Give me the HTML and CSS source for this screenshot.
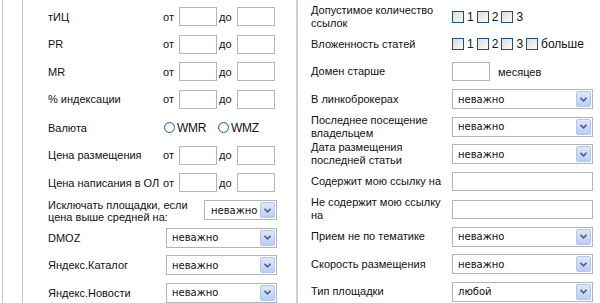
FILE: index.html
```html
<!DOCTYPE html>
<html lang="ru">

<head>
    <meta charset="UTF-8">
    <title>Фильтр площадок</title>
    <link rel="stylesheet" href="styles.css">
</head>

<body>
    <div class="page">
        <div class="left-panel">
            <div class="row range">
                <span class="label">тИЦ</span>
                <span class="from">от</span><input type="text" class="num">
                <span class="to">до</span><input type="text" class="num">
            </div>
            <div class="row range">
                <span class="label">PR</span>
                <span class="from">от</span><input type="text" class="num">
                <span class="to">до</span><input type="text" class="num">
            </div>
            <div class="row range">
                <span class="label">MR</span>
                <span class="from">от</span><input type="text" class="num">
                <span class="to">до</span><input type="text" class="num">
            </div>
            <div class="row range">
                <span class="label">% индексации</span>
                <span class="from">от</span><input type="text" class="num">
                <span class="to">до</span><input type="text" class="num">
            </div>
            <div class="row currency">
                <span class="label">Валюта</span>
                <label class="radio"><i class="circle"></i>WMR</label>
                <label class="radio"><i class="circle"></i>WMZ</label>
            </div>
            <div class="row range">
                <span class="label">Цена размещения</span>
                <span class="from">от</span><input type="text" class="num">
                <span class="to">до</span><input type="text" class="num">
            </div>
            <div class="row range">
                <span class="label">Цена написания в ОЛ</span>
                <span class="from">от</span><input type="text" class="num">
                <span class="to">до</span><input type="text" class="num">
            </div>
            <div class="row">
                <span class="label label-wide">Исключать площадки, если цена выше средней на:</span>
                <div class="select select-small"><span>неважно</span><i class="arrow"><svg width="7" height="5" viewBox="0 0 7 5"><path d="M0.5 0.8 L3.5 3.8 L6.5 0.8" fill="none" stroke="#4d6185" stroke-width="1.6"/></svg></i></div>
            </div>
            <div class="row">
                <span class="label label-sel">DMOZ</span>
                <div class="select select-left"><span>неважно</span><i class="arrow"><svg width="7" height="5" viewBox="0 0 7 5"><path d="M0.5 0.8 L3.5 3.8 L6.5 0.8" fill="none" stroke="#4d6185" stroke-width="1.6"/></svg></i></div>
            </div>
            <div class="row">
                <span class="label label-sel">Яндекс.Каталог</span>
                <div class="select select-left"><span>неважно</span><i class="arrow"><svg width="7" height="5" viewBox="0 0 7 5"><path d="M0.5 0.8 L3.5 3.8 L6.5 0.8" fill="none" stroke="#4d6185" stroke-width="1.6"/></svg></i></div>
            </div>
            <div class="row">
                <span class="label label-sel">Яндекс.Новости</span>
                <div class="select select-left"><span>неважно</span><i class="arrow"><svg width="7" height="5" viewBox="0 0 7 5"><path d="M0.5 0.8 L3.5 3.8 L6.5 0.8" fill="none" stroke="#4d6185" stroke-width="1.6"/></svg></i></div>
            </div>
        </div>

        <div class="right-panel">
            <div class="row">
                <span class="rlabel">Допустимое количество ссылок</span>
                <div class="checks">
                    <label class="check"><i class="box"></i>1</label>
                    <label class="check"><i class="box"></i>2</label>
                    <label class="check"><i class="box"></i>3</label>
                </div>
            </div>
            <div class="row">
                <span class="rlabel">Вложенность статей</span>
                <div class="checks">
                    <label class="check"><i class="box"></i>1</label>
                    <label class="check"><i class="box"></i>2</label>
                    <label class="check"><i class="box"></i>3</label>
                    <label class="check"><i class="box"></i>больше</label>
                </div>
            </div>
            <div class="row">
                <span class="rlabel">Домен старше</span>
                <input type="text" class="num">
                <span class="months">месяцев</span>
            </div>
            <div class="row">
                <span class="rlabel">В линкоброкерах</span>
                <div class="select"><span>неважно</span><i class="arrow"><svg width="7" height="5" viewBox="0 0 7 5"><path d="M0.5 0.8 L3.5 3.8 L6.5 0.8" fill="none" stroke="#4d6185" stroke-width="1.6"/></svg></i></div>
            </div>
            <div class="row">
                <span class="rlabel">Последнее посещение владельцем</span>
                <div class="select"><span>неважно</span><i class="arrow"><svg width="7" height="5" viewBox="0 0 7 5"><path d="M0.5 0.8 L3.5 3.8 L6.5 0.8" fill="none" stroke="#4d6185" stroke-width="1.6"/></svg></i></div>
            </div>
            <div class="row">
                <span class="rlabel">Дата размещения последней статьи</span>
                <div class="select"><span>неважно</span><i class="arrow"><svg width="7" height="5" viewBox="0 0 7 5"><path d="M0.5 0.8 L3.5 3.8 L6.5 0.8" fill="none" stroke="#4d6185" stroke-width="1.6"/></svg></i></div>
            </div>
            <div class="row">
                <span class="rlabel">Содержит мою ссылку на</span>
                <input type="text" class="wide">
            </div>
            <div class="row">
                <span class="rlabel">Не содержит мою ссылку на</span>
                <input type="text" class="wide">
            </div>
            <div class="row">
                <span class="rlabel">Прием не по тематике</span>
                <div class="select"><span>неважно</span><i class="arrow"><svg width="7" height="5" viewBox="0 0 7 5"><path d="M0.5 0.8 L3.5 3.8 L6.5 0.8" fill="none" stroke="#4d6185" stroke-width="1.6"/></svg></i></div>
            </div>
            <div class="row">
                <span class="rlabel">Скорость размещения</span>
                <div class="select"><span>неважно</span><i class="arrow"><svg width="7" height="5" viewBox="0 0 7 5"><path d="M0.5 0.8 L3.5 3.8 L6.5 0.8" fill="none" stroke="#4d6185" stroke-width="1.6"/></svg></i></div>
            </div>
            <div class="row">
                <span class="rlabel">Тип площадки</span>
                <div class="select"><span>любой</span><i class="arrow"><svg width="7" height="5" viewBox="0 0 7 5"><path d="M0.5 0.8 L3.5 3.8 L6.5 0.8" fill="none" stroke="#4d6185" stroke-width="1.6"/></svg></i></div>
            </div>
        </div>
    </div>
</body>

</html>
```

FILE: styles.css
```css
body {
    margin: 0;
    padding: 0;
    background-color: #fff;
    font-family: "Liberation Sans", Arial, sans-serif;
    font-size: 11px;
    color: #111;
}

.page {
    display: flex;
    margin-left: 2px;
    padding-left: 19px;
    border-left: 1px solid #c8c8c8;
    height: 303px;
    overflow: hidden;
}

.left-panel {
    width: 273px;
    border-left: 1px solid #c8c8c8;
    border-right: 2px solid #d0d0d0;
    padding-top: 3px;
    box-sizing: content-box;
}

.right-panel {
    flex: 1;
    padding-left: 13px;
    padding-top: 3px;
}

.row {
    display: flex;
    align-items: center;
    height: 27.5px;
}

.left-panel .row {
    padding-left: 25px;
}

.label {
    width: 114px;
    flex-shrink: 0;
    white-space: nowrap;
}

.label-sel {
    width: 118px;
}

.label-wide {
    width: 156px;
    white-space: normal;
    line-height: 12px;
    padding-top: 2px;
}

.from {
    width: 16px;
    padding-left: 1px;
    flex-shrink: 0;
}

.to {
    width: 18px;
    padding-left: 2px;
    flex-shrink: 0;
}

input.num {
    width: 38px;
    height: 19px;
    margin: 0;
    padding: 0;
    border: 1px solid #b4b4b4;
    box-sizing: border-box;
    flex-shrink: 0;
}

input.wide {
    width: 141px;
    height: 19px;
    margin: 0;
    padding: 0;
    border: 1px solid #b4b4b4;
    box-sizing: border-box;
}

.currency {
    padding-top: 1px;
}

.currency .label {
    width: 116px;
}

.radio {
    display: flex;
    align-items: center;
    margin-right: 12px;
    font-size: 12px;
    letter-spacing: -0.3px;
}

.circle {
    width: 11px;
    height: 11px;
    margin-right: 2px;
    border: 1px solid #1f5bb0;
    border-radius: 50%;
    box-sizing: border-box;
    background: radial-gradient(circle at 60% 60%, #ffffff 30%, #dcdcd6 100%);
}

.select {
    display: flex;
    align-items: center;
    justify-content: space-between;
    width: 141px;
    height: 20px;
    padding-left: 5px;
    border: 1px solid #b4b4b4;
    box-sizing: border-box;
    background-color: #fff;
    font-family: "DejaVu Sans", Verdana, sans-serif;
    font-size: 10px;
}

.select-left {
    width: 111px;
}

.select-small {
    width: 73px;
    padding-left: 6px;
}

.arrow {
    display: flex;
    align-items: center;
    justify-content: center;
    width: 15px;
    height: 16px;
    margin-right: 1px;
    box-sizing: border-box;
    border: 1px solid #b5c6ea;
    border-radius: 2px;
    background: linear-gradient(#dde8fd, #b9cdf5);
}

.rlabel {
    width: 141px;
    flex-shrink: 0;
    line-height: 13px;
}

.checks {
    display: flex;
    align-items: center;
}

.check {
    display: flex;
    align-items: center;
    margin-right: 3px;
    font-size: 12px;
}

.box {
    width: 12px;
    height: 12px;
    margin-right: 3px;
    border: 1px solid #1c5180;
    box-sizing: border-box;
    background: linear-gradient(135deg, #dcdcd7, #fbfbf9);
}

.months {
    margin-left: 8px;
}
```
